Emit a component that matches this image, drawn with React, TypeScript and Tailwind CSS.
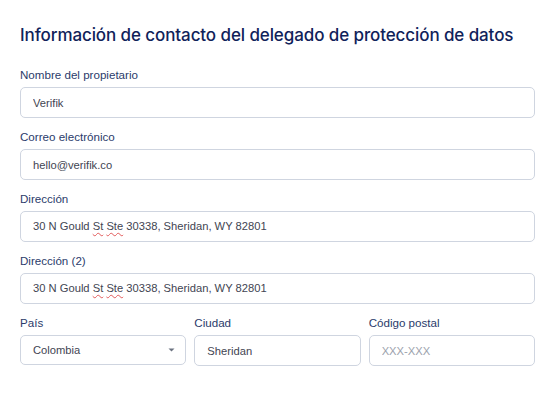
import React from 'react';

const labelCls = 'block text-[11.6px] leading-4 text-[#2b3b6b] mb-1';
const boxCls =
  'w-full h-[31px] rounded-[5px] border border-[#cfd5e0] bg-white px-3 text-[11.2px] text-[#3f4552] outline-none';

function Field({ label, children }: { label: string; children: React.ReactNode }) {
  return (
    <div className="flex flex-col">
      <label className={labelCls}>{label}</label>
      {children}
    </div>
  );
}

function Misspelled({ children }: { children: React.ReactNode }) {
  return <span className="underline decoration-wavy decoration-[#e25b5b] decoration-1 underline-offset-2">{children}</span>;
}

function AddressBox() {
  return (
    <div className={`${boxCls} flex items-center`}>
      <span>
        30 N Gould <Misspelled>St</Misspelled> <Misspelled>Ste</Misspelled> 30338, Sheridan, WY 82801
      </span>
    </div>
  );
}

export default function App() {
  return (
    <div className="min-h-screen bg-white px-5 pt-[23px]" style={{ fontFamily: '"Liberation Sans", Arial, sans-serif' }}>
      <h1
        className="text-[17px] leading-6 font-medium text-[#10225a] mb-5 tracking-[-0.1px]"
        style={{ fontFamily: 'Inter, "Noto Sans", sans-serif' }}
      >
        Información de contacto del delegado de protección de datos
      </h1>
      <div className="flex flex-col gap-[11px]">
        <Field label="Nombre del propietario">
          <input className={boxCls} defaultValue="Verifik" />
        </Field>
        <Field label="Correo electrónico">
          <input className={boxCls} defaultValue="hello@verifik.co" />
        </Field>
        <Field label="Dirección">
          <AddressBox />
        </Field>
        <Field label="Dirección (2)">
          <AddressBox />
        </Field>
        <div className="grid grid-cols-3 gap-2">
          <Field label="País">
            <div className={`${boxCls} !h-[30px] !pr-[10px] flex items-center justify-between`}>
              <span>Colombia</span>
              <svg width="7" height="4" viewBox="0 0 7 4">
                <path d="M0.5 0.5h6L3.5 3.5z" fill="#6b7280" />
              </svg>
            </div>
          </Field>
          <Field label="Ciudad">
            <input className={boxCls} defaultValue="Sheridan" />
          </Field>
          <Field label="Código postal">
            <input className={`${boxCls} placeholder-[#9ca2ad]`} placeholder="XXX-XXX" />
          </Field>
        </div>
      </div>
    </div>
  );
}
